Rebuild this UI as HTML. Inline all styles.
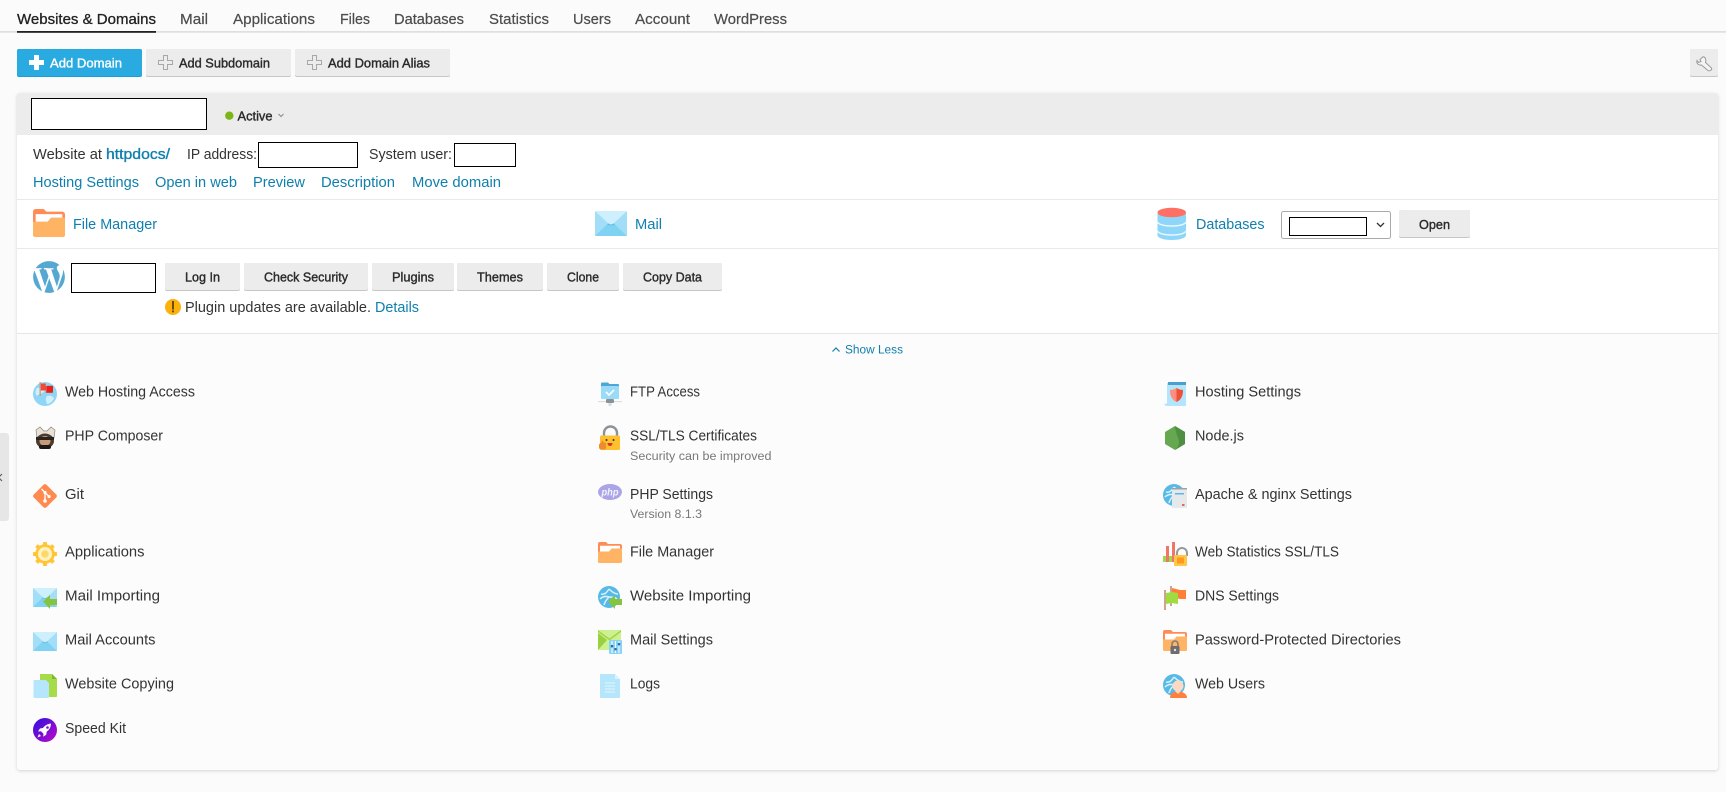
<!DOCTYPE html>
<html lang="en">
<head>
<meta charset="utf-8">
<title>Websites &amp; Domains</title>
<style>
html,body{margin:0;padding:0;background:#fbfbfb;width:1726px;height:792px;overflow:hidden}
svg{display:block;font-family:"Liberation Sans",Arial,sans-serif}
text{font-size:14.3px;fill:#333}
.tab{fill:#4c4c4c;stroke:#4c4c4c;stroke-width:.2px}
.act{fill:#222;stroke:#222;stroke-width:.3px}
.l{fill:#0f7fae}
.lb{fill:#0f7fae;stroke:#0f7fae;stroke-width:.35px}
.b{font-size:12.6px;fill:#2b2b2b;stroke:#2b2b2b;stroke-width:.38px}
.w{font-size:12.6px;fill:#fff;stroke:#fff;stroke-width:.35px}
.s{font-size:12.2px;fill:#787878}
.btn{fill:#ececec}
.bl{fill:#c6c6c6}
</style>
</head>
<body>
<svg width="1726" height="792" viewBox="0 0 1726 792" xmlns="http://www.w3.org/2000/svg">
<defs>
  <g id="folder">
    <path d="M0 2a2 2 0 0 1 2-2h6l2 2h12a2 2 0 0 1 2 2v6H0z" fill="#ff8c56"/>
    <path d="M2 3.800h20v7H2z" fill="#fff"/>
    <path d="M0 9.500h11l2.500-3H24V19.500a1.500 1.500 0 0 1-1.500 1.500h-21A1.500 1.500 0 0 1 0 19.500z" fill="#ffb364"/>
  </g>
  <g id="mail">
    <rect width="24" height="19" rx=".8" fill="#a2def7"/>
    <path d="M0 19 L9.800 9.500 H14.200 L24 19z" fill="#80d2f3"/>
    <path d="M0 0 H24 L14.200 9.300 Q12 11.200 9.800 9.300z" fill="#cdf0fc"/>
    <path d="M9.800 9.300 Q12 11.200 14.200 9.300 L14.800 10.800 H9.200z" fill="#62bbe2"/>
  </g>
  <g id="globe">
    <circle cx="12" cy="12" r="12" fill="#8fd6f6"/>
    <path d="M4 6c3-1 5 1 8 0 1 2-1 4-3 5-2 2-4 1-5 3C2 12 2 9 4 6zM14 14c3-1 5 0 7 2-1 3-4 6-7 6-1-3-2-5 0-8z" fill="#d2f0fc"/>
  </g>
  <g id="bglobe">
    <circle cx="11" cy="11" r="11" fill="#57b9e6"/>
    <path d="M3 8c4 1 6-2 8-5M11 3c3 3 6 5 9 5M6 19c1-4 3-6 5-8 3 0 6 0 8 2M11 11C8 10 5 10 2 13" stroke="#d8f1fc" stroke-width="1.500" fill="none"/>
  </g>
  <path id="arrow" d="M0 7.500 L7 1v4h7v6H7v4z" fill="#86c440"/>
</defs>

<!-- page background -->
<rect width="1726" height="792" fill="#fbfbfb"/>

<!-- tabs -->
<rect x="0" y="31" width="1726" height="1.700" fill="#dfdfdf"/>
<rect x="17" y="31" width="139" height="1.800" fill="#222"/>
<text class="act" x="17" y="24" textLength="139" lengthAdjust="spacingAndGlyphs">Websites &amp; Domains</text>
<text class="tab" x="180" y="24" textLength="28" lengthAdjust="spacingAndGlyphs">Mail</text>
<text class="tab" x="233" y="24" textLength="82" lengthAdjust="spacingAndGlyphs">Applications</text>
<text class="tab" x="340" y="24" textLength="30" lengthAdjust="spacingAndGlyphs">Files</text>
<text class="tab" x="394" y="24" textLength="70" lengthAdjust="spacingAndGlyphs">Databases</text>
<text class="tab" x="489" y="24" textLength="60" lengthAdjust="spacingAndGlyphs">Statistics</text>
<text class="tab" x="573" y="24" textLength="38" lengthAdjust="spacingAndGlyphs">Users</text>
<text class="tab" x="635" y="24" textLength="55" lengthAdjust="spacingAndGlyphs">Account</text>
<text class="tab" x="714" y="24" textLength="73" lengthAdjust="spacingAndGlyphs">WordPress</text>

<!-- toolbar buttons -->
<rect x="17" y="49" width="125" height="28" rx="2" fill="#1e9fd4"/>
<rect x="17" y="49" width="125" height="27" rx="2" fill="#29abe2"/>
<path d="M34 55h5v5h5v5h-5v5h-5v-5h-5v-5h5z" fill="#fff"/>
<text class="w" x="50" y="67.500" textLength="72" lengthAdjust="spacingAndGlyphs">Add Domain</text>

<rect x="146" y="49" width="145" height="28" rx="2" class="bl"/>
<rect x="146" y="49" width="145" height="27" rx="2" class="btn"/>
<path d="M163.500 55.500h4v5h5v4h-5v5h-4v-5h-5v-4h5z" fill="none" stroke="#a8a8a8"/>
<text class="b" x="179" y="67.500" textLength="91" lengthAdjust="spacingAndGlyphs">Add Subdomain</text>

<rect x="295" y="49" width="155" height="28" rx="2" class="bl"/>
<rect x="295" y="49" width="155" height="27" rx="2" class="btn"/>
<path d="M312.500 55.500h4v5h5v4h-5v5h-4v-5h-5v-4h5z" fill="none" stroke="#a8a8a8"/>
<text class="b" x="328" y="67.500" textLength="102" lengthAdjust="spacingAndGlyphs">Add Domain Alias</text>

<rect x="1690" y="49" width="28" height="28" rx="2" class="bl"/>
<rect x="1690" y="49" width="28" height="27" rx="2" class="btn"/>
<path transform="translate(1696 56)" d="M7 .8L4 3.500 5 5.500 2.500 6.500 1 4.500C.2 7.500 2.500 9.500 5.500 9L12 14.500C13.500 15.500 16.500 14 15.500 12L9.500 6.500C10.500 3 9 .8 7 .8z" fill="#f4f4f4" stroke="#9a9a9a" stroke-width="1"/>

<!-- side handle -->
<path d="M0 433h6a3 3 0 0 1 3 3v82a3 3 0 0 1-3 3H0z" fill="#e6e6e6"/>
<path d="M2 474l-3.500 3.500L2 481" stroke="#555" stroke-width="1" fill="none"/>

<!-- card -->
<rect x="17" y="93" width="1701" height="677" rx="3" fill="#fcfcfc" style="filter:drop-shadow(0 1px 1.500px rgba(0,0,0,.16))"/>
<path d="M17 135V96a3 3 0 0 1 3-3h1695a3 3 0 0 1 3 3v39z" fill="#ececec"/>
<rect x="17" y="135" width="1701" height="199" fill="#fff"/>
<rect x="17" y="199" width="1701" height="1" fill="#e9e9e9"/>
<rect x="17" y="248" width="1701" height="1" fill="#e9e9e9"/>
<rect x="17" y="333" width="1701" height="1" fill="#e6e6e6"/>

<!-- card header -->
<rect x="31.500" y="98.500" width="175" height="31" fill="#fff" stroke="#000"/>
<circle cx="229.300" cy="115.700" r="4.200" fill="#7cb518"/>
<text class="b" x="237.500" y="120.500" textLength="35" lengthAdjust="spacingAndGlyphs">Active</text>
<path d="M278.500 114l2.500 2.500 2.500-2.500" fill="none" stroke="#888"/>

<!-- site info -->
<text x="33" y="159" textLength="69" lengthAdjust="spacingAndGlyphs">Website at</text>
<text class="lb" x="106" y="159" textLength="64" lengthAdjust="spacingAndGlyphs">httpdocs/</text>
<text x="187" y="159" textLength="70" lengthAdjust="spacingAndGlyphs">IP address:</text>
<rect x="258.500" y="142.500" width="99" height="25" fill="#fff" stroke="#000"/>
<text x="369" y="159" textLength="83" lengthAdjust="spacingAndGlyphs">System user:</text>
<rect x="454.500" y="143.500" width="61" height="23" fill="#fff" stroke="#000"/>

<text class="l" x="33" y="187" textLength="106" lengthAdjust="spacingAndGlyphs">Hosting Settings</text>
<text class="l" x="155" y="187" textLength="82" lengthAdjust="spacingAndGlyphs">Open in web</text>
<text class="l" x="253" y="187" textLength="52" lengthAdjust="spacingAndGlyphs">Preview</text>
<text class="l" x="321" y="187" textLength="74" lengthAdjust="spacingAndGlyphs">Description</text>
<text class="l" x="412" y="187" textLength="89" lengthAdjust="spacingAndGlyphs">Move domain</text>

<!-- primary row -->
<use href="#folder" transform="translate(33 209) scale(1.333)"/>
<text class="l" x="73" y="229" textLength="84" lengthAdjust="spacingAndGlyphs">File Manager</text>
<use href="#mail" transform="translate(595 211) scale(1.333 1.316)"/>
<text class="l" x="635" y="229" textLength="27" lengthAdjust="spacingAndGlyphs">Mail</text>
<g>
  <path d="M1157.500 213v22c0 3 6 5 14.250 5s14.250-2 14.250-5v-22z" fill="#8ed6f9"/>
  <path d="M1157.500 222c1 2.500 7 4 14.250 4s13.250-1.500 14.250-4M1157.500 231c1 2.500 7 4 14.250 4s13.250-1.500 14.250-4" fill="none" stroke="#eaf8fe" stroke-width="1.400"/>
  <ellipse cx="1171.750" cy="212.500" rx="14.250" ry="4.800" fill="#ff6f63"/>
</g>
<text class="l" x="1196" y="229" textLength="68.500" lengthAdjust="spacingAndGlyphs">Databases</text>
<rect x="1281.500" y="211.500" width="109" height="27" rx="2" fill="#fff" stroke="#a9a9a9"/>
<rect x="1289.500" y="217.500" width="77" height="18" fill="#fff" stroke="#000"/>
<path d="M1377 223l3.500 3.500 3.500-3.500" fill="none" stroke="#333" stroke-width="1.300"/>
<rect x="1399" y="210" width="71" height="28" rx="2" class="bl"/>
<rect x="1399" y="210" width="71" height="27" rx="2" class="btn"/>
<text class="b" x="1419" y="229" textLength="31" lengthAdjust="spacingAndGlyphs">Open</text>

<!-- WordPress row -->
<path transform="translate(49 277) scale(1.470) translate(-12 -12)" fill="#55a8d2" d="M21.469 6.825c.84 1.537 1.318 3.3 1.318 5.175 0 3.979-2.156 7.456-5.363 9.325l3.295-9.527c.615-1.54.82-2.771.82-3.864 0-.405-.026-.78-.07-1.11m-7.981.105c.647-.03 1.232-.105 1.232-.105.582-.075.514-.93-.067-.899 0 0-1.755.135-2.88.135-1.064 0-2.85-.15-2.85-.15-.585-.03-.661.855-.075.885 0 0 .54.061 1.125.09l1.68 4.605-2.37 7.08L5.354 6.9c.649-.03 1.234-.1 1.234-.1.585-.075.516-.93-.065-.896 0 0-1.746.138-2.874.138-.2 0-.438-.008-.69-.015C4.911 3.15 8.235 1.215 12 1.215c2.809 0 5.365 1.072 7.286 2.833-.046-.003-.091-.009-.141-.009-1.06 0-1.812.923-1.812 1.914 0 .89.513 1.643 1.06 2.531.411.72.89 1.643.89 2.977 0 .915-.354 1.994-.821 3.479l-1.075 3.585-3.9-11.61.001.014zM12 22.784c-1.059 0-2.081-.153-3.048-.437l3.237-9.406 3.315 9.087c.024.053.05.101.078.149-1.12.393-2.325.609-3.582.609M1.211 12c0-1.564.336-3.05.935-4.39L7.29 21.709C3.694 19.96 1.212 16.271 1.21 12"/>
<rect x="71.500" y="263.500" width="84" height="29" fill="#fff" stroke="#000"/>

<rect x="165" y="263" width="75" height="28" rx="2" class="bl"/><rect x="165" y="263" width="75" height="27" rx="2" class="btn"/>
<text class="b" x="185" y="281.500" textLength="35" lengthAdjust="spacingAndGlyphs">Log In</text>
<rect x="244" y="263" width="124" height="28" rx="2" class="bl"/><rect x="244" y="263" width="124" height="27" rx="2" class="btn"/>
<text class="b" x="264" y="281.500" textLength="84" lengthAdjust="spacingAndGlyphs">Check Security</text>
<rect x="372" y="263" width="82" height="28" rx="2" class="bl"/><rect x="372" y="263" width="82" height="27" rx="2" class="btn"/>
<text class="b" x="392" y="281.500" textLength="42" lengthAdjust="spacingAndGlyphs">Plugins</text>
<rect x="457" y="263" width="86" height="28" rx="2" class="bl"/><rect x="457" y="263" width="86" height="27" rx="2" class="btn"/>
<text class="b" x="477" y="281.500" textLength="46" lengthAdjust="spacingAndGlyphs">Themes</text>
<rect x="547" y="263" width="72" height="28" rx="2" class="bl"/><rect x="547" y="263" width="72" height="27" rx="2" class="btn"/>
<text class="b" x="567" y="281.500" textLength="32" lengthAdjust="spacingAndGlyphs">Clone</text>
<rect x="623" y="263" width="99" height="28" rx="2" class="bl"/><rect x="623" y="263" width="99" height="27" rx="2" class="btn"/>
<text class="b" x="643" y="281.500" textLength="59" lengthAdjust="spacingAndGlyphs">Copy Data</text>

<circle cx="173" cy="307" r="8" fill="#fdb10d"/>
<rect x="172.100" y="301" width="1.800" height="8.500" fill="#5b4300"/>
<rect x="172.100" y="310.500" width="1.800" height="1.800" fill="#5b4300"/>
<text x="185" y="312" textLength="186" lengthAdjust="spacingAndGlyphs">Plugin updates are available.</text>
<text class="l" x="375" y="312" textLength="44" lengthAdjust="spacingAndGlyphs">Details</text>

<!-- Show less -->
<path d="M832.500 351.500l3.500-3.500 3.500 3.500" fill="none" stroke="#0f7fae" stroke-width="1.200"/>
<text class="l" x="845" y="353.500" style="font-size:12.300px" textLength="58" lengthAdjust="spacingAndGlyphs">Show Less</text>

<!-- Column 1 -->
<g transform="translate(33 382)">
  <use href="#globe"/>
  <rect x="6.500" y="0" width="1.300" height="14" fill="#c79a80"/>
  <path d="M7.800 1.500h5v2.500h7v7h-7v-2.500h-5z" fill="#f04a3e"/>
  <rect x="14" y="3.800" width="6" height="6.500" fill="#e4221a"/>
</g>
<text x="65" y="396.700" textLength="130" lengthAdjust="spacingAndGlyphs">Web Hosting Access</text>

<g transform="translate(35 426)">
  <path d="M1 4l4-3 4 4h3l4-4 4 3-1 8H2z" fill="#e8e2d6" stroke="#8f8778" stroke-width=".7"/>
  <ellipse cx="10" cy="15" rx="9" ry="7.500" fill="#4a3a30"/>
  <ellipse cx="10" cy="15" rx="5.500" ry="5" fill="#c89b78"/>
  <path d="M1 11h18v3H1z" fill="#2a2320"/>
  <rect x="4" y="19" width="12" height="4" rx="2" fill="#1d1a18"/>
</g>
<text x="65" y="440.700" textLength="98" lengthAdjust="spacingAndGlyphs">PHP Composer</text>

<g transform="translate(33 484)">
  <path d="M10.500 .8a2 2 0 0 1 3 0l9.700 9.700a2 2 0 0 1 0 3l-9.700 9.700a2 2 0 0 1-3 0L.8 13.500a2 2 0 0 1 0-3z" fill="#ff8a50"/>
  <path d="M8.500 5l3.500 3.500v8M12 8.500l4 4" stroke="#fff" stroke-width="1.400" fill="none"/>
  <circle cx="12" cy="17" r="1.800" fill="#fff"/><circle cx="12" cy="8.500" r="1.600" fill="#fff"/><circle cx="16" cy="12.500" r="1.600" fill="#fff"/>
</g>
<text x="65" y="499" textLength="19" lengthAdjust="spacingAndGlyphs">Git</text>

<g transform="translate(33 542)">
  <g fill="#ffc535">
    <rect x="10" y="0" width="4" height="24" rx=".8"/>
    <rect x="10" y="0" width="4" height="24" rx=".8" transform="rotate(45 12 12)"/>
    <rect x="10" y="0" width="4" height="24" rx=".8" transform="rotate(90 12 12)"/>
    <rect x="10" y="0" width="4" height="24" rx=".8" transform="rotate(135 12 12)"/>
    <circle cx="12" cy="12" r="9.800"/>
  </g>
  <circle cx="12" cy="12" r="7" fill="#fff2c2"/>
  <circle cx="12" cy="12" r="3.800" fill="#ffd86a"/>
</g>
<text x="65" y="556.700" textLength="79.500" lengthAdjust="spacingAndGlyphs">Applications</text>

<g transform="translate(33 588)">
  <use href="#mail"/>
  <use href="#arrow" transform="translate(10 6)"/>
</g>
<text x="65" y="600.700" textLength="95" lengthAdjust="spacingAndGlyphs">Mail Importing</text>

<use href="#mail" transform="translate(33 632)"/>
<text x="65" y="644.700" textLength="90.500" lengthAdjust="spacingAndGlyphs">Mail Accounts</text>

<g transform="translate(33 674)">
  <path d="M7 0h12l5 5v17a1 1 0 0 1-1 1H7z" fill="#a6dc4a"/>
  <path d="M19 0l5 5h-5z" fill="#7fb82e"/>
  <path d="M1.500 6H13l3 3v14a1 1 0 0 1-1 1H1.500a1 1 0 0 1-1-1V7a1 1 0 0 1 1-1z" fill="#b5e6fb"/>
</g>
<text x="65" y="688.700" textLength="109" lengthAdjust="spacingAndGlyphs">Website Copying</text>

<g transform="translate(33 718)">
  <defs><linearGradient id="sk" x1="0" y1="0" x2="1" y2="1"><stop offset="0" stop-color="#2a10e0"/><stop offset="1" stop-color="#c10ac9"/></linearGradient></defs>
  <circle cx="12" cy="12" r="12" fill="url(#sk)"/>
  <path d="M18.500 5.500c-4 .3-6.500 1.800-8.500 4.500l-3 .5-2 3 3-.3 2.500 2.500-.3 3 3-2 .5-3c2.700-2 4.200-4.500 4.300-8.200z" fill="#fff"/>
  <circle cx="14.500" cy="9.500" r="1.300" fill="#6a10d8"/>
  <path d="M6 16l-1.500 3.500L8 18z" fill="#fff"/>
</g>
<text x="65" y="733" textLength="61" lengthAdjust="spacingAndGlyphs">Speed Kit</text>

<!-- Column 2 -->
<g transform="translate(598 382)">
  <path d="M3 1.500a1 1 0 0 1 1-1h6l1.500 1.500H20a1 1 0 0 1 1 1v3H3z" fill="#4ea6d6"/>
  <rect x="3" y="4" width="18" height="13" rx="1" fill="#9adcf8"/>
  <path d="M8 10l3 3 5-5" stroke="#fff" stroke-width="1.600" fill="none"/>
  <rect x="0" y="19" width="24" height="1.200" fill="#d9dfe3"/>
  <rect x="8" y="17" width="8" height="4" rx="1" fill="#8a9298"/>
  <rect x="10.500" y="21" width="3" height="3" fill="#d5dde2"/>
</g>
<text x="630" y="396.700" textLength="70" lengthAdjust="spacingAndGlyphs">FTP Access</text>

<g transform="translate(599 426)">
  <path d="M5 11V7a6.500 6.500 0 0 1 13 0v4" fill="none" stroke="#8c9298" stroke-width="2.400"/>
  <rect x="1" y="9.500" width="20" height="14.500" rx="1.200" fill="#ffc02e"/>
  <circle cx="7.500" cy="14" r="1" fill="#333"/><circle cx="14.500" cy="14" r="1" fill="#333"/>
  <path d="M8.500 17h5c0 2-1 3-2.500 3s-2.500-1-2.500-3z" fill="#d33a2a"/>
  <path d="M0 19c0-1 1-2 2-2l1-2.500c1 0 1.500.5 1.500 2H6c1 0 1 1 1 2v3c0 1-.5 2-1.500 2H2c-1 0-2-1-2-2z" fill="#ef8a2e"/>
</g>
<text x="630" y="440.700" textLength="127" lengthAdjust="spacingAndGlyphs">SSL/TLS Certificates</text>
<text class="s" x="630" y="460" textLength="141.500" lengthAdjust="spacingAndGlyphs">Security can be improved</text>

<g transform="translate(598 484)">
  <ellipse cx="12" cy="8" rx="12" ry="8" fill="#aaa5e8"/>
  <text x="3.500" y="11.500" textLength="17" lengthAdjust="spacingAndGlyphs" style="font-size:10px;font-weight:bold;font-style:italic;fill:#f4f3fd">php</text>
</g>
<text x="630" y="499" textLength="83" lengthAdjust="spacingAndGlyphs">PHP Settings</text>
<text class="s" x="630" y="518" textLength="72" lengthAdjust="spacingAndGlyphs">Version 8.1.3</text>

<use href="#folder" transform="translate(598 542)"/>
<text x="630" y="556.700" textLength="84" lengthAdjust="spacingAndGlyphs">File Manager</text>

<g transform="translate(598 586)">
  <use href="#bglobe"/>
  <use href="#arrow" transform="translate(10 8)"/>
</g>
<text x="630" y="600.700" textLength="121" lengthAdjust="spacingAndGlyphs">Website Importing</text>

<g transform="translate(598 630)">
  <path d="M0 0h23v14H11v6H0z" fill="#cdf191"/>
  <path d="M0 0l11.500 8.500L23 0v2l-11.500 8.500L0 2z" fill="#a0d84a"/>
  <path d="M0 20V3l9 7L0 20z" fill="#98d040"/>
  <rect x="11" y="10" width="13" height="14" rx="1" fill="#88d4f6"/>
  <path d="M14 11v12M17.500 11v12M21 11v12" stroke="#fff" stroke-width="1"/>
  <rect x="12.800" y="15" width="2.400" height="2.400" fill="#2a6fa8"/><rect x="16.300" y="18" width="2.400" height="2.400" fill="#2a6fa8"/><rect x="19.800" y="13" width="2.400" height="2.400" fill="#2a6fa8"/>
</g>
<text x="630" y="644.700" textLength="83" lengthAdjust="spacingAndGlyphs">Mail Settings</text>

<g transform="translate(600 674)">
  <path d="M1 0h14l5 5v18a1 1 0 0 1-1 1H1a1 1 0 0 1-1-1V1a1 1 0 0 1 1-1z" fill="#b5e6fb"/>
  <path d="M15 0l5 5h-5z" fill="#dcf3fd"/>
  <path d="M5 9h10M5 12h10M5 15h10M5 18h10" stroke="#e4f6fe" stroke-width="1"/>
</g>
<text x="630" y="688.700" textLength="30" lengthAdjust="spacingAndGlyphs">Logs</text>

<!-- Column 3 -->
<g transform="translate(1164 382)">
  <path d="M3 1h19v23H3c-1 0-2-.5-3-2 1 0 2-.5 3-.5z" fill="#b3e6fc"/>
  <rect x="4" y="0" width="18" height="3" fill="#4a9fd0"/>
  <path d="M6 8c2 0 4-.5 6.500-2 2.500 1.500 4.500 2 6.500 2 0 6-2 10-6.500 12C8 18 6 14 6 8z" fill="#ff8e80"/>
  <path d="M12.500 6c2.500 1.500 4.500 2 6.500 2 0 6-2 10-6.500 12z" fill="#ef5038"/>
</g>
<text x="1195" y="396.700" textLength="106" lengthAdjust="spacingAndGlyphs">Hosting Settings</text>

<g transform="translate(1165 426)">
  <path d="M10 0l10 6v12l-10 6-10-6V6z" fill="#66a84f"/>
  <path d="M10 0l10 6v12l-10 6c4-4 5-8 3-12-1-3-3-8-3-12z" fill="#4f8f42"/>
</g>
<text x="1195" y="440.700" textLength="49" lengthAdjust="spacingAndGlyphs">Node.js</text>

<g transform="translate(1163 484)">
  <use href="#bglobe"/>
  <rect x="9" y="4" width="15" height="20" fill="#e6e9ec"/>
  <rect x="9" y="4" width="15" height="1.500" fill="#9aa3a8"/>
  <rect x="12" y="9" width="9" height="1.500" fill="#5bb7e4"/>
  <rect x="19" y="20" width="2.500" height="2" fill="#f2634f"/>
</g>
<text x="1195" y="499" textLength="157" lengthAdjust="spacingAndGlyphs">Apache &amp; nginx Settings</text>

<g transform="translate(1163 542)">
  <rect x="0" y="14" width="5" height="6" fill="#9fd84c"/>
  <rect x="3" y="4" width="3" height="16" fill="#f0766a"/>
  <rect x="9" y="0" width="3" height="20" fill="#f0766a"/>
  <rect x="6" y="14" width="3" height="6" fill="#9fd84c"/>
  <rect x="12" y="14" width="4" height="6" fill="#9fd84c"/>
  <path d="M14 14v-3a5 5 0 0 1 10 0v3" fill="none" stroke="#949a9e" stroke-width="2"/>
  <rect x="11" y="13" width="13" height="11" rx="1" fill="#ffc74a"/>
  <rect x="14" y="15.500" width="7" height="6" fill="#ff9a1f"/>
</g>
<text x="1195" y="556.700" textLength="144" lengthAdjust="spacingAndGlyphs">Web Statistics SSL/TLS</text>

<g transform="translate(1164 586)">
  <rect x="0" y="4" width="2" height="20" fill="#cfa48c"/>
  <rect x="6" y="0" width="2" height="20" fill="#cfa48c"/>
  <path d="M8 2l8 2h6v9h-6l-8-2z" fill="#ff7e38"/>
  <path d="M2 7l6-1 6 1v11l-6-1-6 1z" fill="#9fdc42"/>
</g>
<text x="1195" y="600.700" textLength="84" lengthAdjust="spacingAndGlyphs">DNS Settings</text>

<g transform="translate(1163 630)">
  <use href="#folder"/>
  <path d="M9 17v-3a3 3 0 0 1 6 0v3" fill="none" stroke="#7c7c7c" stroke-width="1.600"/>
  <rect x="7.500" y="16" width="9" height="8" rx="1" fill="#6d6d6d"/>
  <circle cx="12" cy="20" r="1.200" fill="#e2e2e2"/>
</g>
<text x="1195" y="644.700" textLength="206" lengthAdjust="spacingAndGlyphs">Password-Protected Directories</text>

<g transform="translate(1163 674)">
  <use href="#bglobe"/>
  <circle cx="15" cy="12" r="5.500" fill="#fcd9c2"/>
  <path d="M7 24c0-4 3-6.500 8-6.500s9 2.500 9 6.500z" fill="#ff7f3e"/>
  <path d="M12 17h6l-3 3z" fill="#fcd9c2"/>
</g>
<text x="1195" y="688.700" textLength="70" lengthAdjust="spacingAndGlyphs">Web Users</text>
</svg>
</body>
</html>
